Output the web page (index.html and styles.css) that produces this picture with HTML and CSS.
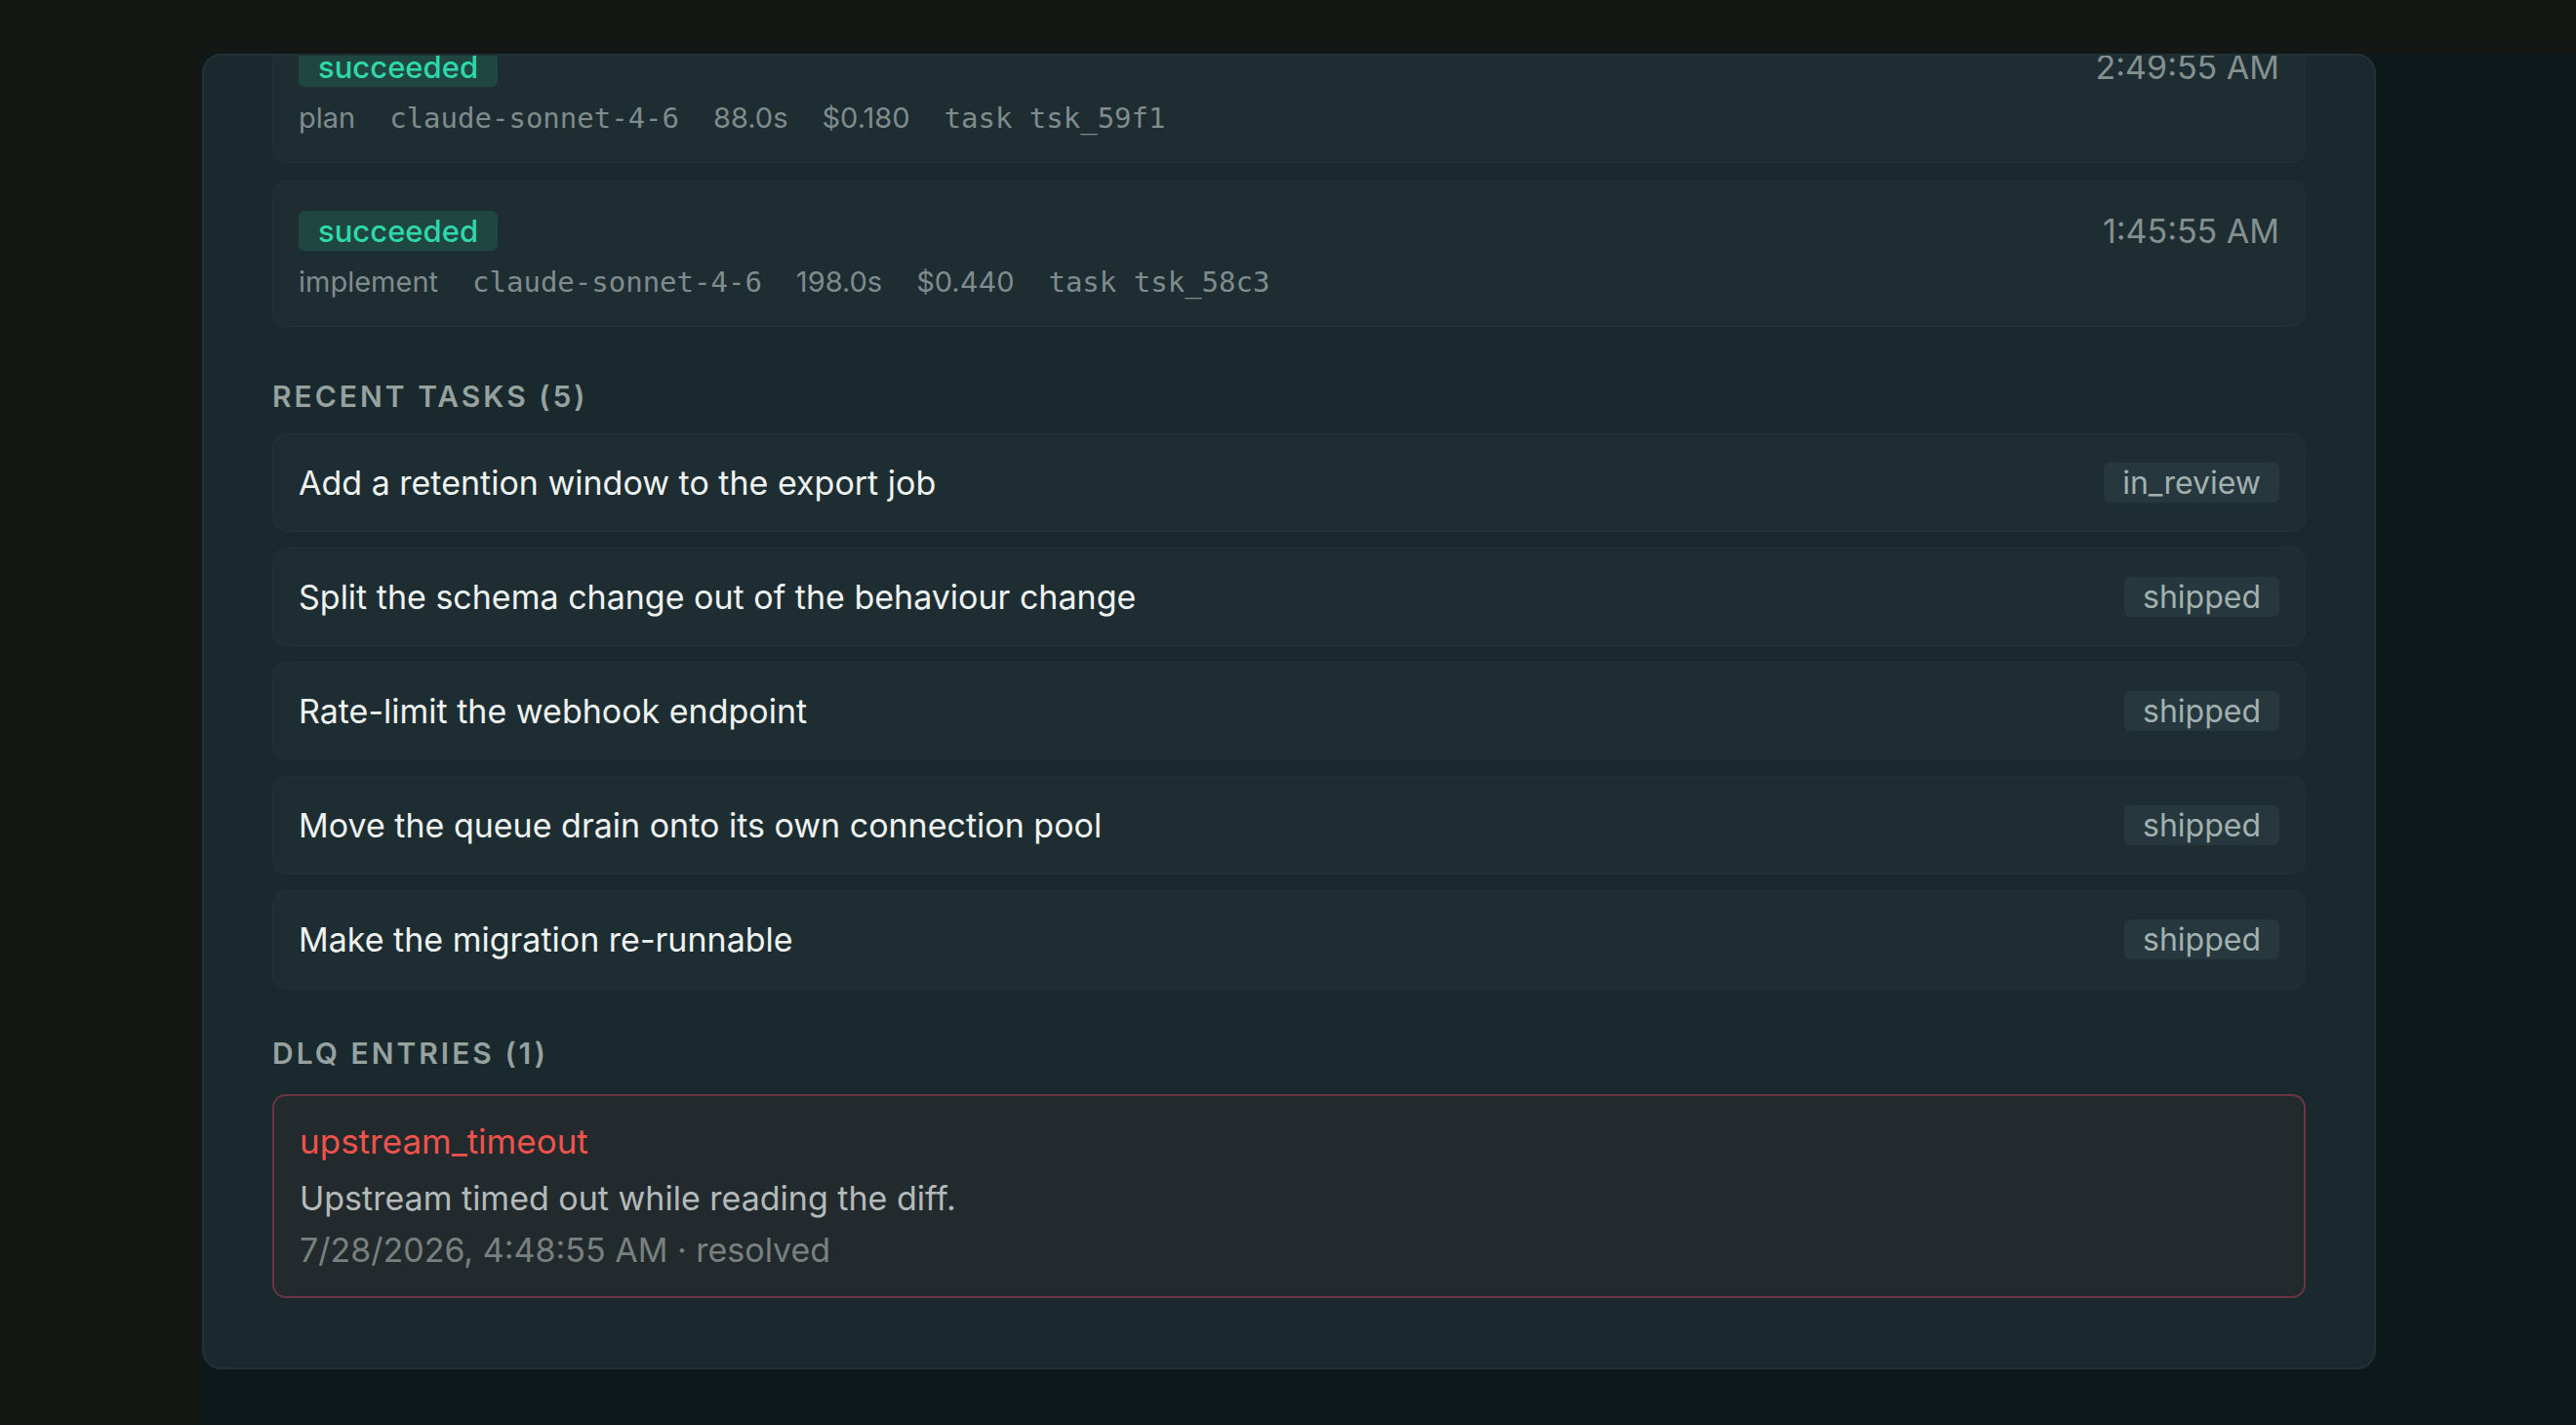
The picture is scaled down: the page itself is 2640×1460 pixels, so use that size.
FILE: index.html
```html
<!DOCTYPE html>
<html lang="en">
<head>
<meta charset="utf-8">
<title>Agent runs</title>
<link rel="stylesheet" href="styles.css">
</head>
<body>
<div class="stage">
  <section class="panel">
    <div class="scroll">
      <div class="runs">
        <div class="run">
          <div class="run-main">
            <span class="badge ok">succeeded</span>
            <div class="meta">
              <span>plan</span>
              <span class="mono">claude-sonnet-4-6</span>
              <span>88.0s</span>
              <span>$0.180</span>
              <span class="mono">task tsk_59f1</span>
            </div>
          </div>
          <span class="time">2:49:55 AM</span>
        </div>
        <div class="run">
          <div class="run-main">
            <span class="badge ok">succeeded</span>
            <div class="meta">
              <span>implement</span>
              <span class="mono">claude-sonnet-4-6</span>
              <span>198.0s</span>
              <span>$0.440</span>
              <span class="mono">task tsk_58c3</span>
            </div>
          </div>
          <span class="time">1:45:55 AM</span>
        </div>
      </div>

      <h2 class="section-title tasks-title">Recent tasks (5)</h2>
      <ul class="tasks">
        <li class="task"><span>Add a retention window to the export job</span><span class="tag">in_review</span></li>
        <li class="task"><span>Split the schema change out of the behaviour change</span><span class="tag">shipped</span></li>
        <li class="task"><span>Rate-limit the webhook endpoint</span><span class="tag">shipped</span></li>
        <li class="task"><span>Move the queue drain onto its own connection pool</span><span class="tag">shipped</span></li>
        <li class="task"><span>Make the migration re-runnable</span><span class="tag">shipped</span></li>
      </ul>

      <h2 class="section-title dlq-title">DLQ entries (1)</h2>
      <div class="dlq">
        <div class="dlq-code">upstream_timeout</div>
        <div class="dlq-msg">Upstream timed out while reading the diff.</div>
        <div class="dlq-date">7/28/2026, 4:48:55 AM · resolved</div>
      </div>
    </div>
  </section>
</div>
</body>
</html>
```

FILE: styles.css
```css
* { box-sizing: border-box; }

html, body {
  margin: 0;
  padding: 0;
  height: 100%;
}

body {
  background: #151715;
  font-family: Inter, "Noto Sans", sans-serif;
  color: #e6ecea;
  overflow: hidden;
}

.stage {
  margin-left: 207px;
  margin-top: 55px;
  height: 1405px;
  background: #0d181a;
}

.panel {
  width: 2228px;
  height: 1348px;
  background: #1a292d;
  border: 2px solid #213236;
  border-radius: 20px;
  overflow: hidden;
  padding: 0 70px 0 70px;
}

.scroll {
  margin-top: -40px;
}

.runs {
  display: flex;
  flex-direction: column;
  gap: 18px;
}

.run {
  display: flex;
  justify-content: space-between;
  align-items: flex-start;
  height: 150px;
  padding: 30px 26px 27px 26px;
  background: #1e2d32;
  border: 1px solid #213338;
  border-radius: 14px;
}

.run-main {
  display: flex;
  flex-direction: column;
  align-items: flex-start;
}

.badge {
  display: inline-block;
  height: 41px;
  line-height: 41px;
  padding: 0 20px;
  border-radius: 6px;
  font-size: 31px;
  font-weight: 500;
}

.badge.ok {
  background: #1f4640;
  color: #2fd8aa;
}

.meta {
  display: flex;
  gap: 35px;
  margin-top: 12px;
  height: 40px;
  line-height: 40px;
  font-size: 29px;
  color: #7f8c8d;
}

.mono {
  font-family: "DejaVu Sans Mono", "Liberation Mono", monospace;
  font-size: 29px;
}

.time {
  font-size: 34px;
  line-height: 41px;
  color: #84908f;
}

.section-title {
  margin: 0;
  font-size: 30px;
  font-weight: 600;
  letter-spacing: 0.1em;
  text-transform: uppercase;
  color: #95a2a0;
  line-height: 36px;
}

.tasks-title {
  margin-top: 53px;
  margin-bottom: 20px;
}

.tasks {
  list-style: none;
  margin: 0;
  padding: 0;
  display: flex;
  flex-direction: column;
  gap: 16px;
}

.task {
  display: flex;
  justify-content: space-between;
  align-items: center;
  height: 101px;
  padding: 0 26px 0 26px;
  background: #1e2d32;
  border: 1px solid #213338;
  border-radius: 14px;
  font-size: 34px;
  color: #eef3f1;
}

.tag {
  height: 41px;
  line-height: 41px;
  padding: 0 19px;
  border-radius: 6px;
  background: #26383d;
  color: #a2b0b0;
  font-size: 32px;
}

.dlq-title {
  margin-top: 48px;
  margin-bottom: 24px;
}

.dlq {
  height: 209px;
  padding: 26px 26px 0 26px;
  background: #232a2d;
  border: 2px solid #6a3442;
  border-radius: 14px;
}

.dlq-code {
  line-height: 40px;
  font-size: 35px;
  color: #f0524c;
}

.dlq-msg {
  margin-top: 19px;
  line-height: 40px;
  font-size: 34px;
  color: #b3bab9;
}

.dlq-date {
  margin-top: 13px;
  line-height: 40px;
  font-size: 34px;
  color: #78817f;
}
```
